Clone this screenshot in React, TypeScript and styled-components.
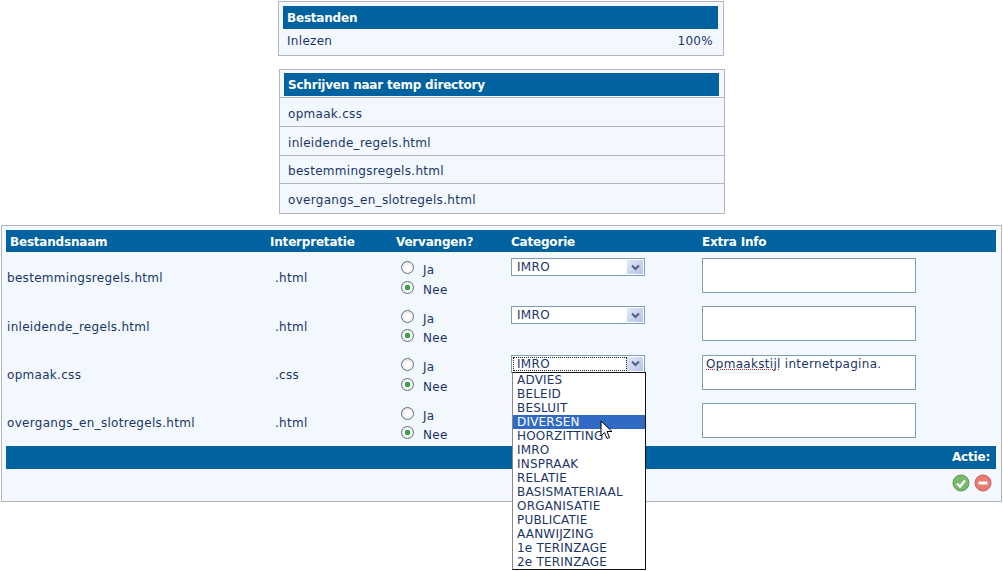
import React from "react";
import styled, { createGlobalStyle } from "styled-components";

const files = [
  { name: "bestemmingsregels.html", ext: ".html", note: "" },
  { name: "inleidende_regels.html", ext: ".html", note: "" },
  { name: "opmaak.css", ext: ".css", note: "Opmaakstijl", open: true },
  { name: "overgangs_en_slotregels.html", ext: ".html", note: "", covered: true },
];

const written = ["opmaak.css", "inleidende_regels.html", "bestemmingsregels.html", "overgangs_en_slotregels.html"];

const categories = [
  "ADVIES", "BELEID", "BESLUIT", "DIVERSEN", "HOORZITTING", "IMRO", "INSPRAAK", "RELATIE",
  "BASISMATERIAAL", "ORGANISATIE", "PUBLICATIE", "AANWIJZING", "1e TERINZAGE", "2e TERINZAGE",
];

const GlobalStyle = createGlobalStyle`
  html, body {
    margin: 0;
    padding: 0;
    background: #ffffff;
    overflow: hidden;
  }
  body {
    font-family: "DejaVu Sans", Verdana, sans-serif;
    font-size: 12px;
    letter-spacing: 0.3px;
    color: #1a3566;
  }
`;

const Page = styled.div`
  position: relative;
  width: 1003px;
  height: 571px;
  padding-top: 1px;
  box-sizing: border-box;
`;

const Panel = styled.section<{ $left: number; $width: number }>`
  margin-left: ${(p) => p.$left}px;
  width: ${(p) => p.$width}px;
  box-sizing: border-box;
  border: 1px solid #b4b6bc;
  background: #f2f8fe;
`;

const SmallPanel = styled(Panel)`
  padding-top: 3px;
  margin-bottom: 13px;
`;

const WritePanel = styled(Panel)`
  padding: 3px 0 1px;
`;

const HeadBar = styled.div`
  margin: 1px 5px 0 4px;
  height: 23px;
  padding-left: 4px;
  display: flex;
  align-items: center;
  background: #00629f;
  color: #ffffff;
  font-weight: bold;
  letter-spacing: -0.2px;
`;

const WriteHead = styled(HeadBar)`
  margin-top: 0;
  margin-bottom: 1px;
`;

const ReadRow = styled.div`
  display: flex;
  justify-content: space-between;
  padding: 0 10px 2px 8px;
  height: 26px;
  box-sizing: border-box;
  align-items: center;
`;

const WriteRow = styled.div`
  height: 28.75px;
  box-sizing: border-box;
  padding: 4px 0 0 8px;
  display: flex;
  align-items: center;
  border-top: 1px solid #b4b6bc;
`;

const MainPanel = styled(Panel)`
  height: 277px;
  margin-top: 11px;
  padding: 4px 5px 0 4px;
`;

const Grid = styled.div`
  display: grid;
  grid-template-columns: 264px 126px 115px 191px 294px;
`;

const HeadCell = styled.div<{ $pad: number }>`
  height: 22px;
  box-sizing: border-box;
  display: flex;
  align-items: center;
  padding: 1px 0 0 ${(p) => p.$pad}px;
  background: #00629f;
  color: #ffffff;
  font-weight: bold;
  letter-spacing: -0.2px;
`;

const Cell = styled.div<{ $pad?: number }>`
  height: 48.4px;
  box-sizing: border-box;
  padding: 4px 0 0 ${(p) => p.$pad ?? 0}px;
  display: flex;
  align-items: center;
`;

const TopCell = styled(Cell)`
  align-items: flex-start;
  padding-top: 6px;
`;

const RadioGroup = styled.div`
  display: flex;
  flex-direction: column;
  padding: 2px 0 0 5px;
`;

const RadioLine = styled.label`
  display: flex;
  align-items: center;
  height: 19.5px;
  box-sizing: border-box;
  padding-top: 2px;
`;

const RadioMark = styled.input`
  appearance: none;
  margin: 0 9px 5px 0;
  width: 13px;
  height: 13px;
  border-radius: 50%;
  border: 1px solid #5a6c7c;
  background: radial-gradient(circle at 65% 65%, #ffffff 30%, #dcdcd4 100%);
  box-sizing: border-box;
  &:checked {
    background: radial-gradient(circle, #36a244 0 2.5px, #ffffff 3px, #eeeee8 100%);
  }
`;

const Select = styled.div`
  width: 134px;
  height: 18px;
  box-sizing: border-box;
  border: 1px solid #7f9db9;
  background: #ffffff;
  padding: 1px;
  display: flex;
  align-items: stretch;
`;

const SelectValue = styled.div<{ $focus?: boolean }>`
  flex: 1;
  padding-left: 4px;
  line-height: 14px;
  outline: ${(p) => (p.$focus ? "1px dotted #222222" : "none")};
  outline-offset: -1px;
`;

const SelectArrow = styled.div`
  width: 16px;
  background: linear-gradient(135deg, #e1e8fb, #b4c4ea);
  display: flex;
  align-items: center;
  justify-content: center;
`;

const NoteBox = styled.div`
  width: 214px;
  height: 35px;
  box-sizing: border-box;
  border: 1px solid #7f9db9;
  background: #ffffff;
  padding: 1px 3px;
  line-height: 15px;
`;

const Spelled = styled.span`
  text-decoration: underline dotted #d0202a 1px;
`;

const FooterBar = styled.div`
  height: 23px;
  background: #00629f;
  color: #ffffff;
  font-weight: bold;
  letter-spacing: -0.2px;
  display: flex;
  align-items: center;
  justify-content: flex-end;
  padding-right: 6px;
`;

const Actions = styled.div`
  display: flex;
  justify-content: flex-end;
  gap: 4px;
  padding: 5px 4px 0 0;
`;

const DropList = styled.ul`
  position: absolute;
  left: 512px;
  top: 372px;
  width: 134px;
  height: 198px;
  margin: 0;
  padding: 0;
  box-sizing: border-box;
  list-style: none;
  background: #ffffff;
  border: 1px solid #111111;
  border-left-color: #888888;
`;

const DropItem = styled.li<{ $active?: boolean }>`
  height: 14px;
  box-sizing: border-box;
  padding: 1px 0 0 4px;
  line-height: 13px;
  letter-spacing: 0.2px;
  white-space: nowrap;
  overflow: hidden;
  background: ${(p) => (p.$active ? "#316ac5" : "transparent")};
  color: ${(p) => (p.$active ? "#ffffff" : "#1a3566")};
`;

const Pointer = styled.svg`
  position: absolute;
  left: 600px;
  top: 420px;
`;

const Chevron = () => (
  <svg width="9" height="7" viewBox="0 0 9 7">
    <path d="M1 1.5 L4.5 5 L8 1.5" fill="none" stroke="#4d6185" strokeWidth="2" />
  </svg>
);

const OkIcon = () => (
  <svg width="18" height="18" viewBox="0 0 18 18">
    <circle cx="9" cy="9" r="8" fill="#79b96a" stroke="#5f9a5a" />
    <path d="M5 9.5 L8 12.5 L13 6.5" fill="none" stroke="#ffffff" strokeWidth="2.4" />
  </svg>
);

const StopIcon = () => (
  <svg width="18" height="18" viewBox="0 0 18 18">
    <circle cx="9" cy="9" r="8" fill="#ea7a72" stroke="#c9625c" />
    <rect x="4.5" y="7.5" width="9" height="3" fill="#ffffff" />
  </svg>
);

const Combo = ({ focus }: { focus?: boolean }) => (
  <Select>
    <SelectValue $focus={focus}>IMRO</SelectValue>
    <SelectArrow>
      <Chevron />
    </SelectArrow>
  </Select>
);

export default function App() {
  return (
    <Page>
      <GlobalStyle />
      <SmallPanel $left={278} $width={446}>
        <HeadBar>Bestanden</HeadBar>
        <ReadRow>
          <span>Inlezen</span>
          <span>100%</span>
        </ReadRow>
      </SmallPanel>

      <WritePanel $left={279} $width={446}>
        <WriteHead>Schrijven naar temp directory</WriteHead>
        {written.map((name) => (
          <WriteRow key={name}>{name}</WriteRow>
        ))}
      </WritePanel>

      <MainPanel $left={1} $width={1001}>
        <Grid>
          <HeadCell $pad={4}>Bestandsnaam</HeadCell>
          <HeadCell $pad={0}>Interpretatie</HeadCell>
          <HeadCell $pad={0}>Vervangen?</HeadCell>
          <HeadCell $pad={0}>Categorie</HeadCell>
          <HeadCell $pad={0}>Extra Info</HeadCell>
          {files.map((f) => (
            <React.Fragment key={f.name}>
              <Cell $pad={1}>{f.name}</Cell>
              <Cell $pad={5}>{f.ext}</Cell>
              <Cell>
                <RadioGroup>
                  <RadioLine>
                    <RadioMark type="radio" name={f.name} readOnly />
                    Ja
                  </RadioLine>
                  <RadioLine>
                    <RadioMark type="radio" name={f.name} readOnly checked />
                    Nee
                  </RadioLine>
                </RadioGroup>
              </Cell>
              <TopCell>{!f.covered && <Combo focus={f.open} />}</TopCell>
              <TopCell>
                <NoteBox>
                  {f.note && (
                    <>
                      <Spelled>{f.note}</Spelled> internetpagina.
                    </>
                  )}
                </NoteBox>
              </TopCell>
            </React.Fragment>
          ))}
        </Grid>
        <FooterBar>Actie:</FooterBar>
        <Actions>
          <OkIcon />
          <StopIcon />
        </Actions>
      </MainPanel>

      <DropList>
        {categories.map((c) => (
          <DropItem key={c} $active={c === "DIVERSEN"}>
            {c}
          </DropItem>
        ))}
      </DropList>

      <Pointer width="14" height="22" viewBox="0 0 14 22">
        <path d="M1 1 L1 16 L4.5 12.5 L7 18.5 L9.5 17.5 L7 11.5 L12 11.5 Z" fill="#ffffff" stroke="#000000" />
      </Pointer>
    </Page>
  );
}
